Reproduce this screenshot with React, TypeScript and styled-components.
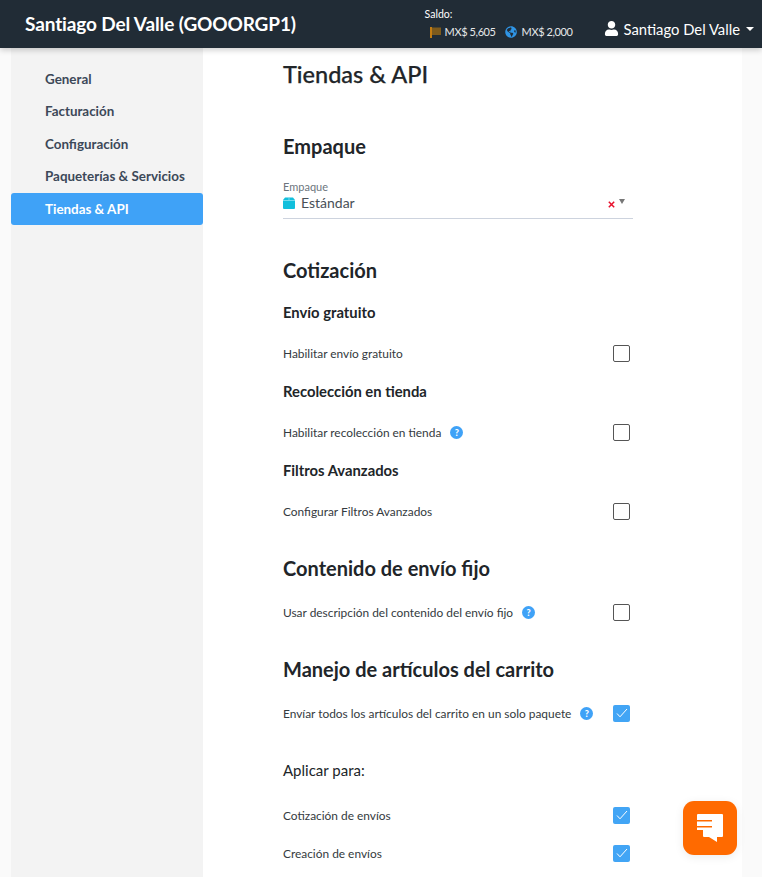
import React from 'react';
import styled, { createGlobalStyle } from 'styled-components';
import { FaUser, FaGlobeAmericas } from 'react-icons/fa';

const GlobalStyle = createGlobalStyle`
  html, body {
    margin: 0;
    height: 100%;
    overflow: hidden;
    background: #fafafa;
    font-family: Lato, "Noto Sans", sans-serif;
    color: #212529;
  }
`;

const menu = ['General', 'Facturación', 'Configuración', 'Paqueterías & Servicios', 'Tiendas & API'];

const App = () => {
  return (
    <Page>
      <GlobalStyle />
      <TopBar>
        <Brand>Santiago Del Valle (GOOORGP1)</Brand>
        <Balance>
          <BalanceLabel>Saldo:</BalanceLabel>
          <BalanceRow>
            <FlagIcon width="11" height="11" viewBox="0 0 11 11">
              <rect width="2" height="11" fill="#c27c12" />
              <rect x="2" y="0.500" width="9" height="7.500" fill="#7d5a1c" />
            </FlagIcon>
            <span>MX$ 5,605</span>
            <GlobeIcon />
            <span>MX$ 2,000</span>
          </BalanceRow>
        </Balance>
        <UserMenu>
          <FaUser size={15} />
          <span>Santiago Del Valle</span>
          <Caret />
        </UserMenu>
      </TopBar>

      <Body>
        <Sidebar>
          {menu.map((item) => (
            <MenuItem key={item} $active={item === 'Tiendas & API'}>
              {item}
            </MenuItem>
          ))}
        </Sidebar>

        <Main>
          <PageTitle>Tiendas &amp; API</PageTitle>

          <SectionTitle $top={44}>Empaque</SectionTitle>
          <SelectField>
            <SelectLabel>Empaque</SelectLabel>
            <SelectValue>
              <BoxIcon />
              <span>Estándar</span>
              <ClearIcon>
                <svg width="7" height="7" viewBox="0 0 7 7">
                  <path d="M0.8 0.8 6.2 6.2M6.2 0.8 0.8 6.2" stroke="#e8112d" strokeWidth="1.5" />
                </svg>
              </ClearIcon>
              <SelectArrow />
            </SelectValue>
          </SelectField>

          <SectionTitle $top={38}>Cotización</SectionTitle>
          <SubTitle $top={20}>Envío gratuito</SubTitle>
          <Row $top={23}>
            <RowLabel>Habilitar envío gratuito</RowLabel>
            <Check />
          </Row>
          <SubTitle $top={20}>Recolección en tienda</SubTitle>
          <Row $top={23}>
            <RowLabel>
              Habilitar recolección en tienda
              <Help />
            </RowLabel>
            <Check />
          </Row>
          <SubTitle $top={20}>Filtros Avanzados</SubTitle>
          <Row $top={23}>
            <RowLabel>Configurar Filtros Avanzados</RowLabel>
            <Check />
          </Row>

          <SectionTitle $top={35}>Contenido de envío fijo</SectionTitle>
          <Row $top={22}>
            <RowLabel>
              Usar descripción del contenido del envío fijo
              <Help />
            </RowLabel>
            <Check />
          </Row>

          <SectionTitle $top={35}>Manejo de artículos del carrito</SectionTitle>
          <Row $top={22}>
            <RowLabel>
              Envíar todos los artículos del carrito en un solo paquete
              <Help />
            </RowLabel>
            <Check $checked />
          </Row>
          <ApplyTitle>Aplicar para:</ApplyTitle>
          <Row $top={27}>
            <RowLabel>Cotización de envíos</RowLabel>
            <Check $checked />
          </Row>
          <Row $top={20}>
            <RowLabel>Creación de envíos</RowLabel>
            <Check $checked />
          </Row>
        </Main>
      </Body>

      <ChatButton>
        <svg width="26" height="28" viewBox="0 0 26 28">
          <path
            fill="#fff"
            d="M1 0H25a1 1 0 0 1 1 1V22a1 1 0 0 1-1 1H20V28L12 23H7a1 1 0 0 1-1-1V16H0V13.500H15V12H0V7.500H15V6H0V1a1 1 0 0 1 1-1z"
          />
        </svg>
      </ChatButton>
    </Page>
  );
};

const Check = ({ $checked }: { $checked?: boolean }) => (
  <CheckBox $checked={$checked}>
    {$checked && (
      <svg width="12" height="10" viewBox="0 0 12 10">
        <path d="M1 5.500 4 8.800 11 1" fill="none" stroke="#fff" strokeWidth="1" />
      </svg>
    )}
  </CheckBox>
);

const Help = () => <HelpDot>?</HelpDot>;

const BoxIcon = () => (
  <BoxGlyph>
    <svg width="12" height="12" viewBox="0 0 12 12">
      <path d="M2 0.500h8l2 2.500v8a1 1 0 0 1-1 1h-10a1 1 0 0 1-1-1v-8z" fill="#12bfdc" />
      <path d="M0 3.500h12M6 0.500v3" stroke="#8fe3f1" strokeWidth="0.800" />
    </svg>
  </BoxGlyph>
);

const Page = styled.div`
  height: 877px;
  overflow: hidden;
  position: relative;
`;

const TopBar = styled.header`
  height: 48px;
  background: #212c36;
  display: flex;
  align-items: center;
  padding: 0 8px 0 25px;
  box-shadow: 0 2px 6px rgba(0, 0, 0, 0.2);
  position: relative;
  z-index: 2;
`;

const Brand = styled.div`
  flex: 1;
  color: #fff;
  font-size: 19px;
  font-weight: 700;
  letter-spacing: -0.130px;
  margin-top: -2px;
`;

const Balance = styled.div`
  display: flex;
  flex-direction: column;
  color: #e6e8ea;
  font-size: 11px;
  margin-right: 31px;
  margin-top: -1px;
`;

const BalanceLabel = styled.div`
  color: #fff;
  font-size: 10.500px;
  line-height: 12px;
  margin: 0 0 5px 1px;
`;

const BalanceRow = styled.div`
  display: flex;
  align-items: center;
  margin-left: 6px;
  letter-spacing: -0.400px;
  line-height: 14px;
`;

const FlagIcon = styled.svg`
  margin-right: 4px;
`;

const GlobeIcon = styled(FaGlobeAmericas)`
  width: 12px;
  height: 12px;
  color: #2f95e6;
  margin: 0 5px 0 9px;
`;

const UserMenu = styled.div`
  display: flex;
  align-items: center;
  color: #fff;
  font-size: 14.800px;
  gap: 5px;
  margin-top: 9px;
`;

const Caret = styled.span`
  width: 0;
  height: 0;
  margin-left: 1px;
  border-left: 4px solid transparent;
  border-right: 4px solid transparent;
  border-top: 4px solid #fff;
`;

const Body = styled.div`
  display: flex;
  height: 829px;
  margin: 0 20px 0 11px;
`;

const Sidebar = styled.nav`
  width: 192px;
  background: #f3f3f3;
  padding-top: 14.750px;
  flex-shrink: 0;
`;

const MenuItem = styled.div<{ $active?: boolean }>`
  height: 32.500px;
  line-height: 32px;
  padding-left: 34px;
  font-size: 13.400px;
  font-weight: 700;
  border-radius: 3px;
  color: ${(p) => (p.$active ? '#fff' : '#3c4858')};
  background: ${(p) => (p.$active ? '#3fa2f7' : 'transparent')};
`;

const Main = styled.main`
  flex: 1;
  background: #fff;
  padding: 0 109px 0 80px;
`;

const PageTitle = styled.h1`
  margin: 12px 0 0;
  font-size: 23.500px;
  line-height: 29px;
  font-weight: 500;
  color: #212529;
  -webkit-text-stroke: 0.250px #212529;
`;

const SectionTitle = styled.h2<{ $top: number }>`
  margin: ${(p) => p.$top}px 0 0;
  font-size: 20px;
  line-height: 26px;
  font-weight: 700;
  color: #212529;
`;

const SubTitle = styled.h3<{ $top: number }>`
  margin: ${(p) => p.$top}px 0 0;
  font-size: 14.800px;
  line-height: 18px;
  font-weight: 700;
  color: #212529;
`;

const ApplyTitle = styled.div`
  margin-top: 39px;
  font-size: 15px;
  line-height: 18px;
  color: #212529;
`;

const SelectField = styled.div`
  margin-top: 21px;
  height: 38px;
  border-bottom: 1px solid #cdd3de;
  display: flex;
  flex-direction: column;
`;

const SelectLabel = styled.div`
  font-size: 11px;
  line-height: 13px;
  color: #6c757d;
`;

const SelectValue = styled.div`
  display: flex;
  align-items: center;
  font-size: 14px;
  line-height: 18px;
  color: #495057;
  margin-top: 1px;
`;

const BoxGlyph = styled.span`
  display: flex;
  margin-right: 6px;
`;

const ClearIcon = styled.span`
  display: flex;
  margin-left: auto;
  margin-right: 4px;
  margin-top: 2px;
`;

const SelectArrow = styled.span`
  width: 0;
  height: 0;
  margin: -4px 8px 0 0;
  border-left: 3px solid transparent;
  border-right: 3px solid transparent;
  border-top: 5px solid #777;
`;

const Row = styled.div<{ $top: number }>`
  margin-top: ${(p) => p.$top}px;
  height: 18px;
  display: flex;
  align-items: center;
  justify-content: space-between;
  padding-right: 3px;
`;

const RowLabel = styled.div`
  display: flex;
  align-items: center;
  font-size: 11.900px;
  color: #343a40;
`;

const HelpDot = styled.span`
  width: 13px;
  height: 13px;
  margin-left: 9px;
  border-radius: 50%;
  background: #3fa2f7;
  color: #fff;
  font-size: 9px;
  font-weight: 900;
  line-height: 13px;
  text-align: center;
`;

const CheckBox = styled.span<{ $checked?: boolean }>`
  box-sizing: border-box;
  width: 17px;
  height: 17px;
  border-radius: 2px;
  display: flex;
  align-items: center;
  justify-content: center;
  border: ${(p) => (p.$checked ? 'none' : '1.5px solid #555')};
  background: ${(p) => (p.$checked ? '#42a5f5' : '#fff')};
`;

const ChatButton = styled.div`
  position: absolute;
  left: 683px;
  top: 801px;
  width: 54px;
  height: 54px;
  border-radius: 11px;
  background: #ff6a00;
  display: flex;
  align-items: center;
  justify-content: center;
  box-shadow: 0 2px 10px rgba(0, 0, 0, 0.08);
`;

export default App;
